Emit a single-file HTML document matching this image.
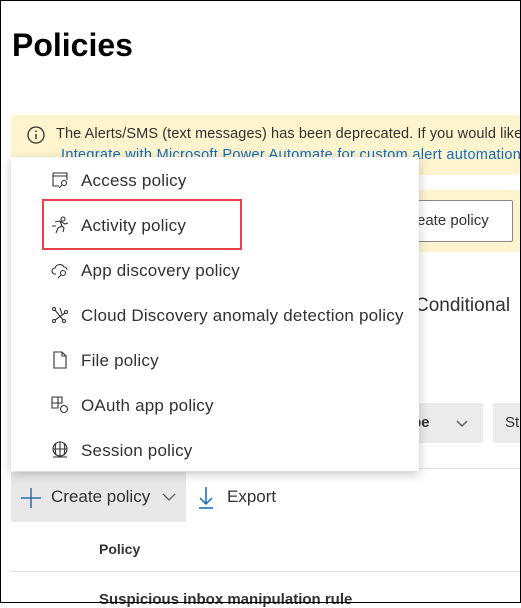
<!DOCTYPE html>
<html><head><meta charset="utf-8"><style>
*{margin:0;padding:0;box-sizing:border-box}
body{width:521px;height:603px;overflow:hidden;background:#fff;font-family:"Liberation Sans",sans-serif;position:relative;color:#323130}
.frame{position:absolute;left:0;top:0;width:521px;height:603px;border:1px solid #000;z-index:50;pointer-events:none}
.abs{position:absolute;white-space:nowrap}
.menu{position:absolute;left:11px;top:157px;width:408px;height:314px;background:#fff;box-shadow:0 3px 10px rgba(0,0,0,.22);z-index:10}
.item{position:absolute;left:70px;font-size:17px;color:#323130;letter-spacing:0.2px}
.ic{position:absolute;left:40px;width:18px;height:18px}
</style></head><body>
<div class="frame"></div>
<div class="abs" style="left:12px;top:27px;font-size:32px;font-weight:bold;color:#000">Policies</div>
<div class="abs" style="left:11px;top:115px;width:510px;height:60px;background:#fff4ce"></div>
<svg class="abs" style="left:26px;top:125px" width="20" height="20"><circle cx="10" cy="10" r="8" fill="none" stroke="#323130" stroke-width="1.3"/><line x1="10" y1="9" x2="10" y2="14" stroke="#323130" stroke-width="1.4"/><circle cx="10" cy="6.3" r="0.9" fill="#323130"/></svg>
<div class="abs" style="left:56px;top:126px;font-size:14.5px;color:#323130;letter-spacing:0.1px">The Alerts/SMS (text messages) has been deprecated. If you would like</div>
<div class="abs" style="left:61px;top:147px;font-size:14.5px;color:#0f6cbd;letter-spacing:0.3px">Integrate with Microsoft Power Automate for custom alert automation</div>
<div class="abs" style="left:11px;top:190px;width:510px;height:62px;background:#fff4ce"></div>
<div class="abs" style="left:395px;top:200px;width:118px;height:42px;background:#fff;border:1px solid #8a8886;border-radius:2px"></div>
<div class="abs" style="left:412px;top:212px;font-size:15px;color:#323130">reate policy</div>
<div class="abs" style="left:415px;top:295px;font-size:19px;color:#323130">Conditional</div>
<div class="abs" style="left:400px;top:403px;width:83px;height:40px;background:#edebe9"></div>
<div class="abs" style="left:412px;top:414px;font-size:15px;font-weight:bold;color:#323130">pe</div>
<svg class="abs" style="left:455px;top:417px" width="14" height="12"><path d="M2 4l5 5 5-5" fill="none" stroke="#605e5c" stroke-width="1.5"/></svg>
<div class="abs" style="left:493px;top:403px;width:28px;height:40px;background:#edebe9"></div>
<div class="abs" style="left:505px;top:414px;font-size:15px;color:#323130">St</div>
<div class="abs" style="left:11px;top:468px;width:510px;height:1px;background:#e1dfdd"></div>
<div class="abs" style="left:11px;top:472px;width:175px;height:50px;background:#e8e8e8"></div>
<svg class="abs" style="left:20px;top:487px" width="22" height="22"><path d="M11 1v20M1 11h20" stroke="#2a6ab3" stroke-width="1.5"/></svg>
<div class="abs" style="left:51px;top:487px;font-size:17px;color:#323130">Create policy</div>
<svg class="abs" style="left:162px;top:491px" width="14" height="12"><path d="M1 3l6 6 6-6" fill="none" stroke="#605e5c" stroke-width="1.3"/></svg>
<svg class="abs" style="left:197px;top:485px" width="18" height="24"><path d="M9 2v17M3 13l6 6 6-6M2 23h14" fill="none" stroke="#0f6cbd" stroke-width="1.5"/></svg>
<div class="abs" style="left:227px;top:487px;font-size:17px;color:#323130">Export</div>
<div class="abs" style="left:99px;top:541px;font-size:14px;font-weight:bold;color:#323130">Policy</div>
<div class="abs" style="left:11px;top:571px;width:510px;height:1px;background:#e1dfdd"></div>
<div class="abs" style="left:99px;top:591px;font-size:15px;font-weight:bold;color:#323130">Suspicious inbox manipulation rule</div>
<div class="menu">
<svg class="ic" style="top:14px" viewBox="0 0 18 18"><path d="M2 2h14v7M2 2v13h6M2 5h14" fill="none" stroke="#323130" stroke-width="1.1"/><circle cx="13" cy="12" r="2.5" fill="none" stroke="#323130" stroke-width="1.1"/><path d="M11 14l-3 3" stroke="#323130" stroke-width="1.1"/></svg>
<div class="item" style="top:14px">Access policy</div>
<svg class="ic" style="top:59px" viewBox="0 0 18 18"><circle cx="12" cy="3" r="2" fill="none" stroke="#323130" stroke-width="1.1"/><path d="M4 6l5-1 2 5-4 2-2 5M10 9l3 3-1 4M9 5l5 3 3-1M1 10h4" fill="none" stroke="#323130" stroke-width="1.1"/></svg>
<div class="item" style="top:59px">Activity policy</div>
<svg class="ic" style="top:104px" viewBox="0 0 18 18"><path d="M5 13H4a3 3 0 010-6 5 5 0 019-1 3 3 0 013 3" fill="none" stroke="#323130" stroke-width="1.1"/><circle cx="12" cy="12" r="2.5" fill="none" stroke="#323130" stroke-width="1.1"/><path d="M10 14l-3 3" stroke="#323130" stroke-width="1.1"/></svg>
<div class="item" style="top:104px">App discovery policy</div>
<svg class="ic" style="top:149px" viewBox="0 0 18 18"><circle cx="3" cy="3" r="1.5" fill="none" stroke="#323130"/><circle cx="15" cy="6" r="1.5" fill="none" stroke="#323130"/><circle cx="3" cy="15" r="1.5" fill="none" stroke="#323130"/><circle cx="13" cy="15" r="1.5" fill="none" stroke="#323130"/><path d="M4 4l8 10M4 14l10-7M9 2l2 6" fill="none" stroke="#323130" stroke-width="1.1"/></svg>
<div class="item" style="top:149px">Cloud Discovery anomaly detection policy</div>
<svg class="ic" style="top:194px" viewBox="0 0 18 18"><path d="M3 1h8l4 4v12H3zM11 1v4h4" fill="none" stroke="#323130" stroke-width="1.1"/></svg>
<div class="item" style="top:194px">File policy</div>
<svg class="ic" style="top:239px" viewBox="0 0 18 18"><path d="M1 1h10v6H1zM1 7v5h6V1" fill="none" stroke="#323130" stroke-width="1.1"/><circle cx="13" cy="13" r="3.5" fill="none" stroke="#323130" stroke-width="1.1"/></svg>
<div class="item" style="top:239px">OAuth app policy</div>
<svg class="ic" style="top:284px" viewBox="0 0 18 18"><circle cx="9" cy="8" r="7" fill="none" stroke="#323130" stroke-width="1.1"/><path d="M2 8h14M9 1v14M5 2c-1 4-1 8 0 12M13 2c1 4 1 8 0 12M2 16h14" fill="none" stroke="#323130" stroke-width="1.1"/></svg>
<div class="item" style="top:284px">Session policy</div>
</div>
<div class="abs" style="left:42px;top:199px;width:200px;height:51px;border:2px solid #e8414a;z-index:20"></div>
</body></html>
